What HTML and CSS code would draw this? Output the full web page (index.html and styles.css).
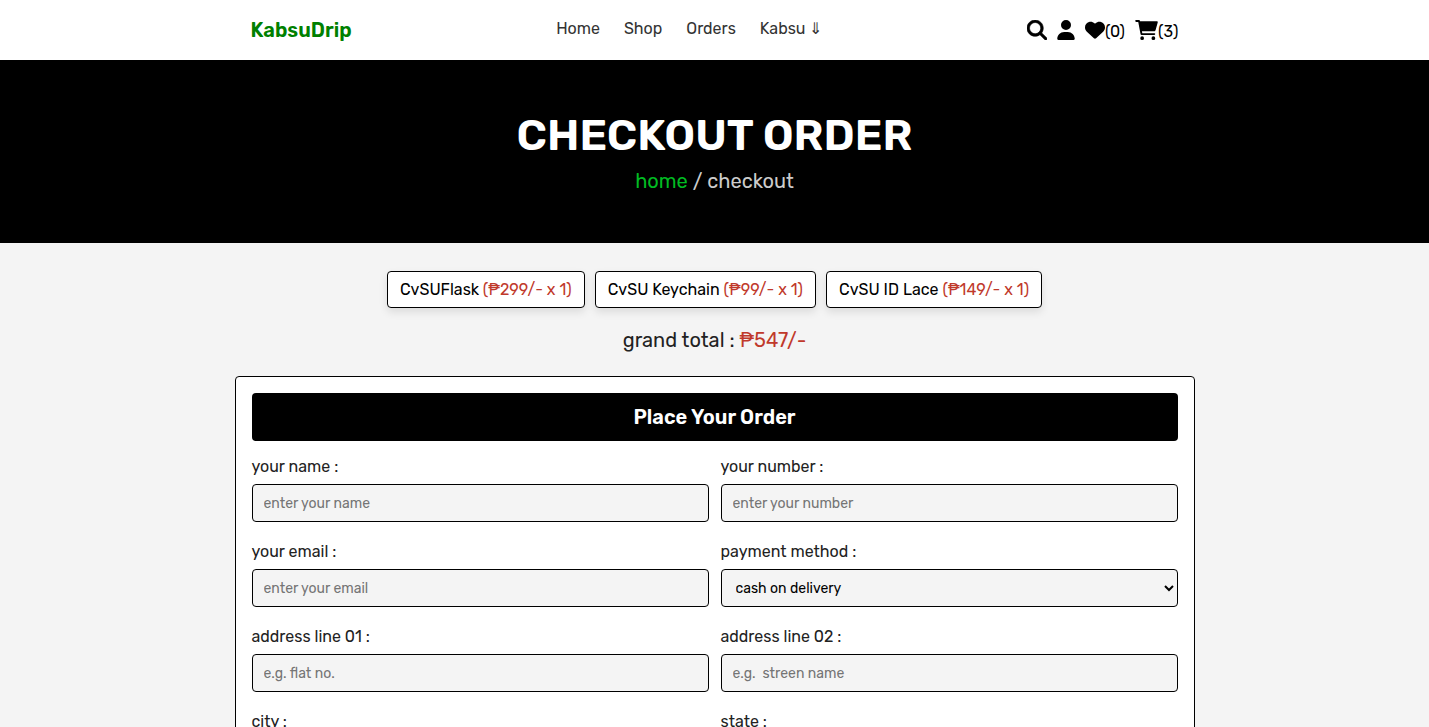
FILE: index.html
```
<!DOCTYPE html>
<html lang="en">
<head>
  <meta charset="UTF-8" />
  <meta name="viewport" content="width=device-width, initial-scale=1.0"/>
  <title>Checkout | KabsuDrip</title>
  <link rel="stylesheet" href="styles.css">
</head>
<body>

  <header class="header">
    <div class="header-inner">
      <a href="#" class="logo">KabsuDrip</a>

      <nav class="navbar">
        <a href="#">Home</a>
        <a href="#">Shop</a>
        <a href="#">Orders</a>
        <a href="#">Kabsu ⇓</a>
      </nav>

      <div class="icons">
        <a href="#" aria-label="Search">
          <svg class="search-icon" width="20" height="20" viewBox="0 0 512 512"><path d="M416 208c0 45.900-14.900 88.300-40 122.700L502.600 457.400c12.500 12.500 12.500 32.800 0 45.300s-32.800 12.500-45.300 0L330.700 376c-34.400 25.200-76.800 40-122.700 40C93.100 416 0 322.900 0 208S93.100 0 208 0S416 93.100 416 208zM208 352a144 144 0 1 0 0-288 144 144 0 1 0 0 288z"/></svg>
        </a>
        <a href="#" aria-label="Account">
          <svg width="18" height="20" viewBox="0 0 448 512"><path d="M224 256A128 128 0 1 0 224 0a128 128 0 1 0 0 256zm-45.700 48C79.800 304 0 383.800 0 482.300C0 498.700 13.300 512 29.700 512H418.300c16.400 0 29.700-13.300 29.700-29.700C448 383.800 368.200 304 269.700 304H178.300z"/></svg>
        </a>
        <a href="#" aria-label="Wishlist">
          <svg width="20" height="20" viewBox="0 0 512 512"><path d="M47.600 300.400L228.300 469.100c7.500 7 17.400 10.900 27.700 10.900s20.200-3.900 27.700-10.900L464.400 300.400c30.400-28.300 47.600-68 47.600-109.500v-5.800c0-69.900-50.500-129.500-119.400-141C347 36.500 300.600 51.400 268 84L256 96 244 84c-32.600-32.600-79-47.500-124.600-39.900C50.500 55.600 0 115.200 0 185.100v5.800c0 41.500 17.200 81.200 47.600 109.500z"/></svg><span>(0)</span>
        </a>
        <a href="#" aria-label="Cart">
          <svg width="23" height="20" viewBox="0 0 576 512"><path d="M24 0H97c11 0 21 8 23 19l3 13H552c16 0 28 15 23 31L521 255c-4 14-17 33-32 33H171l9 48H488c13 0 24 11 24 24s-11 24-24 24H160c-12 0-21-8-24-19L77 48H24C11 48 0 37 0 24S11 0 24 0zM128 464a48 48 0 1 1 96 0 48 48 0 1 1 -96 0zm336-48a48 48 0 1 1 0 96 48 48 0 1 1 0-96z"/></svg><span>(3)</span>
        </a>
      </div>
    </div>
  </header>

  <div class="heading">
    <h1>CHECKOUT ORDER</h1>
    <p><a href="#">home</a> / checkout</p>
  </div>

  <section class="display-orders">
    <div class="order-list">
      <p>CvSUFlask <span>(₱299/- x 1)</span></p>
      <p>CvSU Keychain <span>(₱99/- x 1)</span></p>
      <p>CvSU ID Lace <span>(₱149/- x 1)</span></p>
    </div>
    <div class="grand-total">grand total : <span>₱547/-</span></div>
  </section>

  <section class="checkout-orders">
    <form action="#" method="post">
      <h3>Place Your Order</h3>

      <div class="fields">
        <div class="input-box">
          <label for="name">your name :</label>
          <input type="text" id="name" name="name" placeholder="enter your name" class="box">
        </div>
        <div class="input-box">
          <label for="number">your number :</label>
          <input type="text" id="number" name="number" placeholder="enter your number" class="box">
        </div>
        <div class="input-box">
          <label for="email">your email :</label>
          <input type="email" id="email" name="email" placeholder="enter your email" class="box">
        </div>
        <div class="input-box">
          <label for="method">payment method :</label>
          <select id="method" name="method" class="box">
            <option value="cash on delivery" selected>cash on delivery</option>
          </select>
        </div>
        <div class="input-box">
          <label for="flat">address line 01 :</label>
          <input type="text" id="flat" name="flat" placeholder="e.g. flat no." class="box">
        </div>
        <div class="input-box">
          <label for="street">address line 02 :</label>
          <input type="text" id="street" name="street" placeholder="e.g.  streen name" class="box">
        </div>
        <div class="input-box">
          <label for="city">city :</label>
          <input type="text" id="city" name="city" class="box">
        </div>
        <div class="input-box">
          <label for="state">state :</label>
          <input type="text" id="state" name="state" class="box">
        </div>
      </div>
    </form>
  </section>

</body>
</html>
```
FILE: styles.css
```
* {
  margin: 0;
  padding: 0;
  box-sizing: border-box;
  font-family: Rubik, Roboto, sans-serif;
}

body {
  background-color: #f4f4f4;
  color: #222;
  font-size: 16px;
  line-height: 20px;
}

a {
  text-decoration: none;
}

/* header */
.header {
  background-color: #fff;
}

.header-inner {
  display: flex;
  align-items: center;
  justify-content: space-between;
  max-width: 960px;
  min-height: 60px;
  margin: 0 auto;
  padding: 0 16px;
}

.logo {
  color: #008000;
  font-size: 20px;
  font-weight: 600;
}

.navbar {
  display: flex;
  gap: 24px;
  padding-bottom: 2px;
}

.navbar a {
  color: #333;
}

.icons {
  display: flex;
  gap: 10px;
}

.icons a {
  display: flex;
  align-items: center;
  color: #000;
}

.icons svg {
  fill: currentColor;
}

.icons .search-icon {
  stroke: currentColor;
  stroke-width: 16;
}

.icons span {
  padding-top: 3px;
}

/* page heading */
.heading {
  background-color: #000;
  padding: 48px 16px;
  text-align: center;
}

.heading h1 {
  color: #fff;
  font-size: 44px;
  font-weight: 600;
  line-height: 54px;
}

.heading p {
  margin-top: 6px;
  color: #ccc;
  font-size: 20px;
  line-height: 27px;
}

.heading a {
  color: #0b2;
}

/* order summary */
.display-orders {
  padding: 28px 16px 24px;
  text-align: center;
}

.order-list {
  display: flex;
  flex-wrap: wrap;
  justify-content: center;
  gap: 10px;
}

.order-list p {
  padding: 8px 12px;
  border: 1px solid #000;
  border-radius: 4px;
  background-color: #fff;
  box-shadow: 0 4px 8px rgba(0, 0, 0, 0.1);
  color: #000;
  line-height: 19px;
}

.display-orders span {
  color: #c0392b;
}

.grand-total {
  margin-top: 20px;
  font-size: 20px;
  line-height: 24px;
}

/* checkout form */
.checkout-orders form {
  max-width: 960px;
  margin: 0 auto;
  padding: 16px;
  border: 1px solid #000;
  border-radius: 4px;
  background-color: #fff;
}

.checkout-orders h3 {
  padding: 12px;
  border-radius: 4px;
  background-color: #000;
  color: #fff;
  font-size: 20px;
  font-weight: 600;
  line-height: 24px;
  text-align: center;
}

.fields {
  display: grid;
  grid-template-columns: 1fr 1fr;
  gap: 20px 12px;
  padding-top: 16px;
}

.input-box label {
  display: block;
  margin-bottom: 7px;
}

.box {
  display: block;
  width: 100%;
  height: 38px;
  padding: 0 11px;
  border: 1px solid #000;
  border-radius: 4px;
  background-color: #f4f4f4;
  color: #000;
  font-size: 14px;
}

select.box {
  padding: 0 0 0 10px;
}
```
